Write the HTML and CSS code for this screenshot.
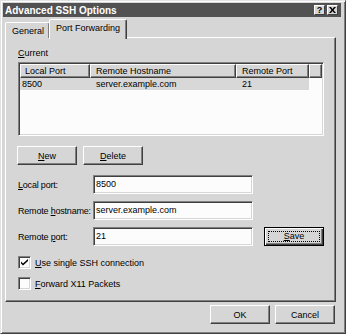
FILE: index.html
```html
<!DOCTYPE html>
<html lang="en">
<head>
<meta charset="UTF-8">
<title>Advanced SSH Options</title>
<link rel="stylesheet" href="styles.css">
</head>
<body>
<div class="window">
    <div class="titlebar">
        <span class="title">Advanced SSH Options</span>
        <span class="title-buttons">
            <span class="tbtn help">?</span>
            <span class="tbtn">
                <svg width="7" height="6" viewBox="0 0 7 6"><path d="M0 0h2l1.5 2 1.5-2h2l-2.5 3 2.5 3h-2l-1.5-2-1.5 2h-2l2.5-3z" fill="#000"/></svg>
            </span>
        </span>
    </div>
    <div class="dialog-body">
        <div class="tabs">
            <div class="tab">General</div>
            <div class="tab active">Port Forwarding</div>
        </div>
        <div class="panel">
            <div class="group-label"><u>C</u>urrent</div>
            <div class="listview">
                <div class="lv-header">
                    <div class="hcol c1">Local Port</div>
                    <div class="hcol c2">Remote Hostname</div>
                    <div class="hcol c3">Remote Port</div>
                    <div class="hcol filler"></div>
                </div>
                <div class="lv-row selected">
                    <div class="cell c1">8500</div>
                    <div class="cell c2">server.example.com</div>
                    <div class="cell c3">21</div>
                </div>
            </div>
            <div class="btn-row">
                <button class="btn"><u>N</u>ew</button>
                <button class="btn"><u>D</u>elete</button>
            </div>
            <div class="field-row first">
                <label class="field-label"><u>L</u>ocal port:</label>
                <div class="field-input">8500</div>
            </div>
            <div class="field-row">
                <label class="field-label">Remote <u>h</u>ostname:</label>
                <div class="field-input">server.example.com</div>
            </div>
            <div class="field-row">
                <label class="field-label">Remote <u>p</u>ort:</label>
                <div class="field-input">21</div>
                <button class="btn default"><span class="focus"><u>S</u>ave</span></button>
            </div>
            <div class="check-row first">
                <span class="checkbox">
                    <svg width="7" height="7" viewBox="0 0 7 7"><path d="M0 2.5l2 2 5-4.5v2l-5 4.5-2-2z" fill="#000"/></svg>
                </span>
                <span><u>U</u>se single SSH connection</span>
            </div>
            <div class="check-row">
                <span class="checkbox"></span>
                <span><u>F</u>orward X11 Packets</span>
            </div>
        </div>
        <div class="dialog-buttons">
            <button class="btn">OK</button>
            <button class="btn">Cancel</button>
        </div>
    </div>
</div>
</body>
</html>
```

FILE: styles.css
```css
body {
    margin: 0;
    background-color: #d6d6d6;
    font-family: "Liberation Sans", Arial, sans-serif;
    font-size: 9px;
    color: #000;
}
u {
    text-decoration: underline;
}
.window {
    width: 346px;
    height: 334px;
    box-sizing: border-box;
    background-color: #d6d6d6;
    border: 1px solid;
    border-color: #e2e2e2 #404040 #404040 #e2e2e2;
    box-shadow: inset 1px 1px #ffffff, inset -1px -1px #808080;
    padding: 2px 4px 0 2px;
}
.titlebar {
    height: 14px;
    background-color: #525252;
    display: flex;
    align-items: center;
    justify-content: space-between;
    padding-left: 2px;
}
.title {
    color: #ffffff;
    font-weight: bold;
    font-size: 10px;
}
.title-buttons {
    display: flex;
    gap: 2px;
    margin-right: 3px;
}
.tbtn {
    width: 11px;
    height: 10px;
    box-sizing: border-box;
    background-color: #d6d6d6;
    border: 1px solid;
    border-color: #ffffff #404040 #404040 #ffffff;
    display: flex;
    align-items: center;
    justify-content: center;
    font-weight: bold;
    font-size: 9px;
    line-height: 8px;
}
.dialog-body {
    padding: 2px 0 0 2px;
}
.tabs {
    display: flex;
    align-items: flex-end;
    height: 19px;
    margin-bottom: -1px;
    position: relative;
    z-index: 1;
}
.tab {
    height: 16px;
    box-sizing: border-box;
    border: 1px solid;
    border-color: #ffffff #404040 transparent #ffffff;
    border-bottom: none;
    border-radius: 2px 2px 0 0;
    box-shadow: inset -1px 0 #808080;
    padding: 3px 5px 0 6px;
    background-color: #d6d6d6;
}
.tab.active {
    height: 20px;
    margin-left: -1px;
    padding: 3px 6px 0 6px;
    margin-bottom: -1px;
}
.panel {
    width: 331px;
    height: 265px;
    box-sizing: border-box;
    border: 1px solid;
    border-color: #ffffff #404040 #404040 #ffffff;
    box-shadow: inset -1px -1px #808080;
    padding: 10px 0 0 12px;
}
.group-label {
    height: 11px;
    line-height: 11px;
}
.listview {
    margin-top: 3px;
    width: 306px;
    height: 74px;
    box-sizing: border-box;
    background-color: #fcfcfc;
    border: 1px solid;
    border-color: #808080 #ffffff #ffffff #808080;
    box-shadow: inset 1px 1px #404040, inset -1px -1px #d6d6d6;
    padding: 1px;
}
.lv-header {
    display: flex;
    height: 14px;
}
.hcol {
    box-sizing: border-box;
    background-color: #d6d6d6;
    border: 1px solid;
    border-color: #ffffff #404040 #404040 #ffffff;
    box-shadow: inset -1px -1px #808080;
    line-height: 12px;
    padding-left: 5px;
    white-space: nowrap;
}
.hcol.c1 {
    padding-left: 4px;
}
.c1 {
    width: 70px;
}
.c2 {
    width: 146px;
}
.c3 {
    width: 73px;
}
.hcol.filler {
    flex: 1;
}
.lv-row {
    display: flex;
    height: 12px;
    line-height: 12px;
}
.lv-row.selected {
    width: 289px;
    background-color: #d8d8d8;
}
.cell {
    padding-left: 6px;
    box-sizing: border-box;
    white-space: nowrap;
}
.cell.c1 {
    padding-left: 2px;
}
.btn-row {
    display: flex;
    gap: 6px;
    margin-top: 10px;
    margin-left: -1px;
}
.btn {
    width: 60px;
    height: 19px;
    box-sizing: border-box;
    background-color: #d6d6d6;
    border: 1px solid;
    border-color: #ffffff #404040 #404040 #ffffff;
    box-shadow: inset -1px -1px #808080;
    font-family: "Liberation Sans", Arial, sans-serif;
    font-size: 9px;
    color: #000;
    padding: 0;
    margin: 0;
}
.btn.default {
    margin-left: 11px;
    border: 1px solid #000;
    box-shadow: inset 1px 1px #ffffff, inset -1px -1px #404040, inset -2px -2px #808080;
    padding: 3px;
}
.btn .focus {
    display: block;
    height: 100%;
    box-sizing: border-box;
    border: 1px dotted #000;
    line-height: 9px;
}
.field-row {
    display: flex;
    align-items: center;
    margin-top: 7px;
}
.field-row.first {
    margin-top: 10px;
}
.field-label {
    width: 75px;
    flex-shrink: 0;
    white-space: nowrap;
    letter-spacing: -0.2px;
}
.field-input {
    width: 160px;
    height: 19px;
    box-sizing: border-box;
    background-color: #fcfcfc;
    border: 1px solid;
    border-color: #808080 #ffffff #ffffff #808080;
    box-shadow: inset 1px 1px #404040, inset -1px -1px #d6d6d6;
    line-height: 17px;
    padding-left: 2px;
}
.check-row {
    display: flex;
    align-items: center;
    gap: 4px;
    height: 13px;
    margin-top: 8px;
}
.check-row.first {
    margin-top: 10px;
}
.checkbox {
    width: 13px;
    height: 13px;
    box-sizing: border-box;
    background-color: #fcfcfc;
    border: 1px solid;
    border-color: #808080 #ffffff #ffffff #808080;
    box-shadow: inset 1px 1px #404040, inset -1px -1px #d6d6d6;
    display: flex;
    align-items: center;
    justify-content: center;
}
.dialog-buttons {
    display: flex;
    justify-content: flex-end;
    gap: 5px;
    width: 330px;
    margin-top: 3px;
}
```
